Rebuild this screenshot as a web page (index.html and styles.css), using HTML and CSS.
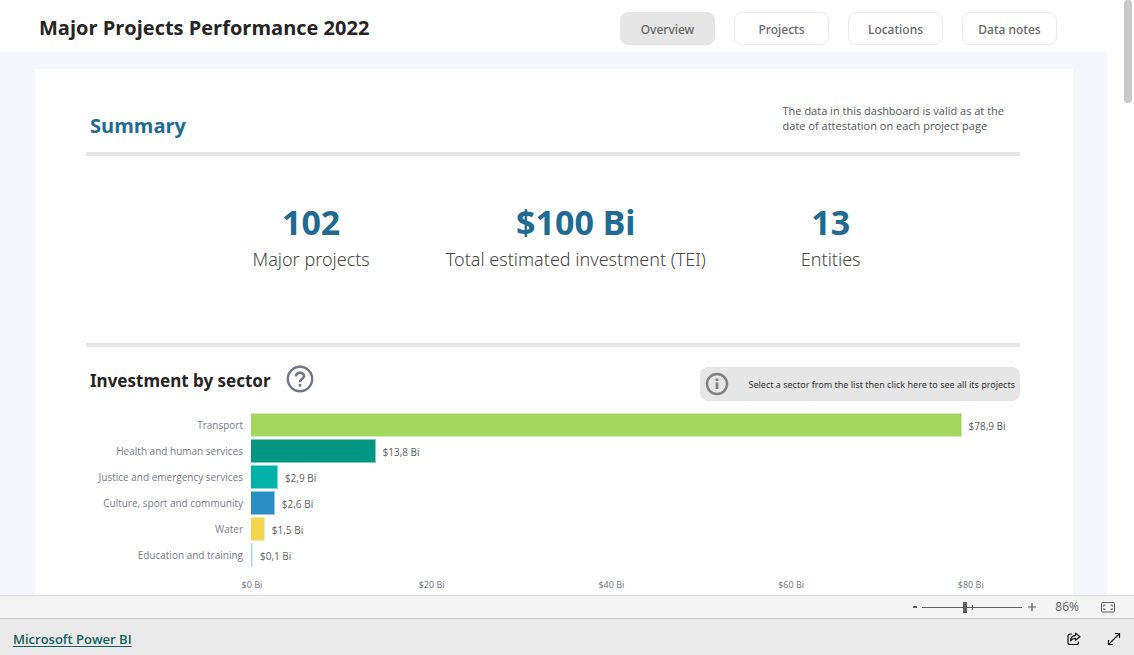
FILE: index.html
```html
<!DOCTYPE html>
<html lang="en">
<head>
<meta charset="utf-8">
<title>Major Projects Performance 2022</title>
<link rel="stylesheet" href="styles.css">
</head>
<body>
<div class="viewport">
  <div class="report">
    <header class="report-header">
      <h1 class="report-title">Major Projects Performance 2022</h1>
      <nav class="tabs">
        <button class="tab tab-active" type="button">Overview</button>
        <button class="tab" type="button">Projects</button>
        <button class="tab" type="button">Locations</button>
        <button class="tab" type="button">Data notes</button>
      </nav>
    </header>
    <main class="canvas">
      <div class="card">
        <section class="summary-head">
          <h2 class="summary-title">Summary</h2>
          <p class="note">The data in this dashboard is valid as at the<br>date of attestation on each project page</p>
        </section>
        <section class="kpis">
          <div class="kpi"><strong class="kpi-value">102</strong><span class="kpi-label">Major projects</span></div>
          <div class="kpi"><strong class="kpi-value">$100 Bi</strong><span class="kpi-label">Total estimated investment (TEI)</span></div>
          <div class="kpi"><strong class="kpi-value">13</strong><span class="kpi-label">Entities</span></div>
        </section>
        <section class="sector">
          <div class="sector-head">
            <h2 class="sector-title">Investment by sector</h2>
            <button class="help" type="button" aria-label="Help">
              <svg width="28" height="28" viewBox="0 0 28 28" fill="none" stroke="#70758c"><circle cx="14" cy="14" r="12.2" stroke-width="2.4"/><path d="M10 11.500C10 6.600 18 6.600 18 11.200C18 13.800 14 14 14 17.200" stroke-width="2.500"/><path d="M14 19v2.600" stroke-width="2.600"/></svg>
            </button>
            <button class="hint" type="button">
              <svg width="24" height="24" viewBox="0 0 24 24" fill="none" stroke="#808080"><circle cx="12" cy="12" r="10" stroke-width="2.400"/><path d="M12 10.500v6.500M12 6.500v2.500" stroke-width="2.800"/></svg>
              <span class="hint-text">Select a sector from the list then click here to see all its projects</span>
            </button>
          </div>
          <div class="chart">
            <div class="row"><span class="row-label">Transport</span><div class="track"><div class="bar bar-transport" style="width:92.4%"></div><span class="row-value">$78,9 Bi</span></div></div>
            <div class="row"><span class="row-label">Health and human services</span><div class="track"><div class="bar bar-health" style="width:16.2%"></div><span class="row-value">$13,8 Bi</span></div></div>
            <div class="row"><span class="row-label">Justice and emergency services</span><div class="track"><div class="bar bar-justice" style="width:3.5%"></div><span class="row-value">$2,9 Bi</span></div></div>
            <div class="row"><span class="row-label">Culture, sport and community</span><div class="track"><div class="bar bar-culture" style="width:3.1%"></div><span class="row-value">$2,6 Bi</span></div></div>
            <div class="row"><span class="row-label">Water</span><div class="track"><div class="bar bar-water" style="width:1.8%"></div><span class="row-value">$1,5 Bi</span></div></div>
            <div class="row"><span class="row-label">Education and training</span><div class="track"><div class="bar bar-education" style="width:0.2%"></div><span class="row-value">$0,1 Bi</span></div></div>
            <div class="axis"><span class="tick">$0 Bi</span><span class="tick">$20 Bi</span><span class="tick">$40 Bi</span><span class="tick">$60 Bi</span><span class="tick">$80 Bi</span></div>
          </div>
        </section>
      </div>
    </main>
  </div>
  <div class="scrollbar"><div class="scroll-thumb"></div></div>
</div>
<div class="zoombar">
  <button class="zoom-step" type="button" aria-label="Zoom out"><svg width="6" height="12" viewBox="0 0 6 12"><path d="M1 6h4" stroke="#605e5c" stroke-width="2"/></svg></button>
  <input class="zoom-slider" type="range" min="0" max="200" value="86" aria-label="Zoom">
  <button class="zoom-step zoom-plus" type="button" aria-label="Zoom in"><svg width="8" height="12" viewBox="0 0 8 12"><path d="M0 6h8M4 2v8" stroke="#605e5c" stroke-width="1.200"/></svg></button>
  <output class="zoom-value">86%</output>
  <button class="zoom-fit" type="button" aria-label="Fit to page"><svg width="14" height="11" viewBox="0 0 14 11" fill="none" stroke="#605e5c"><rect x=".5" y=".5" width="13" height="9.500" rx="1"/><path d="M4.500 3H2.800v1.500M4.500 7.500H2.800V6M9.500 3h1.700v1.500M9.500 7.500h1.700V6"/></svg></button>
</div>
<footer class="footer">
  <a class="brand" href="#">Microsoft Power BI</a>
  <button class="icon-button" type="button" aria-label="Share"><svg width="14" height="14" viewBox="0 0 14 14" fill="none" stroke="#111" stroke-width="1.200" stroke-linejoin="round"><path d="M5 2H3a2 2 0 0 0-2 2v6.500a2 2 0 0 0 2 2h6.500a2 2 0 0 0 2-2V9.500"/><path d="M8.500 1.200L13 4.800L8.500 8.300V6.300C6.200 6.200 4.800 7 3.600 8.800C3.800 5.600 5.500 3.500 8.500 3.300Z"/></svg></button>
  <button class="icon-button" type="button" aria-label="Full screen"><svg width="14" height="14" viewBox="0 0 14 14" fill="none" stroke="#111" stroke-width="1.200"><path d="M1.500 12.500L12.500 1.500M8 1.500h4.500V6M1.500 8v4.500H6"/></svg></button>
</footer>
</body>
</html>
```
FILE: styles.css
```css
* { box-sizing: border-box; }
body {
  margin: 0;
  height: 100vh;
  display: flex;
  flex-direction: column;
  background: #fff;
  color: #252423;
  font-family: "Noto Sans", "Open Sans", sans-serif;
}
h1, h2, p { margin: 0; }
button { font: inherit; color: inherit; border: 0; padding: 0; background: none; cursor: pointer; }
svg { display: block; }

.viewport { flex: 1; min-height: 0; display: flex; overflow: hidden; }
.report { flex: 1; min-width: 0; display: flex; flex-direction: column; }
.report-header {
  display: flex;
  flex: none;
  align-items: center;
  justify-content: space-between;
  height: 52px;
  padding: 4px 50px 0 39px;
}
.report-title { font: 700 20px/28px "Open Sans", sans-serif; color: #252423; }
.tabs { display: flex; gap: 19px; padding-top: 1px; }
.tab {
  width: 95px;
  height: 33px;
  padding-top: 1px;
  border: 1px solid #e9e9e9;
  border-radius: 8px;
  font-weight: 500;
  font-size: 12px;
  color: #666;
}
.tab-active { background: #e6e6e6; border-color: #e6e6e6; }

.canvas { flex: 1; background: #f5f7fc; padding: 17px 34px 0 35px; }
.card { background: #fff; padding: 33px 53px 12px 51px; }

.summary-head {
  display: flex;
  justify-content: space-between;
  align-items: flex-start;
  height: 54px;
  padding: 0 16px 0 4px;
  border-bottom: 4px solid #e6e6e6;
}
.summary-title { padding-top: 10px; font: 700 20px/28px "Open Sans", sans-serif; color: #216b93; }
.note { padding-top: 1px; font: 11px/15px "Open Sans", sans-serif; color: #555; }

.kpis {
  display: flex;
  justify-content: center;
  gap: 76px;
  height: 191px;
  padding: 44px 0 0 7px;
  border-bottom: 4px solid #e6e6e6;
}
.kpi { display: flex; flex-direction: column; align-items: center; }
.kpi:last-child { padding-left: 19px; }
.kpi-value { font-weight: 700; font-size: 34px; line-height: 44px; color: #216b93; }
.kpi-label { font-size: 18px; line-height: 30px; color: #484644; font-weight: 300; }

.sector-head { display: flex; align-items: flex-start; padding: 18px 0 11px 4px; }
.sector-title { margin-top: 2px; font-weight: 700; font-size: 17px; line-height: 28px; color: #252423; }
.help { margin-left: 15px; }
.hint {
  display: flex;
  align-items: center;
  gap: 20px;
  height: 34px;
  margin: 2px 0 0 auto;
  padding: 0 5px;
  border-radius: 8px;
  background: #e6e6e6;
  color: #333;
  font-size: 9px;
}
.row { display: flex; align-items: center; gap: 8px; height: 26px; }
.row-label { flex: none; width: 157px; text-align: right; font: 10px/14px "Open Sans", sans-serif; color: #777b8c; }
.track { flex: 1; display: flex; align-items: center; gap: 7px; }
.bar { height: 24px; flex: none; border: 1px solid rgba(255, 255, 255, 0.5); border-left-width: 0; }
.bar-transport { background: #a4d65e; }
.bar-health { background: #009681; }
.bar-justice { background: #00b2a9; }
.bar-culture { background: #2a8dc3; }
.bar-water { background: #f4d54e; }
.bar-education { background: #a5dceb; min-width: 2px; }
.row-value { padding-top: 2px; font: 10px/14px "Open Sans", sans-serif; color: #605e5c; white-space: nowrap; }
.axis { display: flex; margin: 10px 0 0 166px; }
.tick { flex: none; width: 23.4%; text-align: center; font-size: 9px; line-height: 14px; color: #777b8c; }
.tick:first-child { margin-left: -11.7%; }

.scrollbar { flex: none; width: 27px; padding: 0 2px 0 17px; }
.scroll-thumb { height: 103px; border-radius: 4px; background: #c8c8c8; }

.zoombar {
  flex: none;
  display: flex;
  align-items: center;
  justify-content: flex-end;
  height: 23px;
  padding-right: 19px;
  border-top: 1px solid #dcdcdc;
  background: #f4f4f4;
}
.zoom-slider {
  appearance: none;
  width: 100px;
  height: 12px;
  margin: 0 6px 0 4px;
  background:
    linear-gradient(#605e5c, #605e5c) 50px 50% / 1px 5px no-repeat,
    linear-gradient(#605e5c, #605e5c) 0 50% / 100% 1px no-repeat;
}
.zoom-slider::-webkit-slider-thumb { appearance: none; width: 4px; height: 11px; background: #605e5c; }
.zoom-value { width: 43px; text-align: right; font: 12px/16px "Open Sans", sans-serif; color: #605e5c; }
.zoom-fit { margin-left: 22px; }

.footer {
  flex: none;
  display: flex;
  align-items: center;
  height: 37px;
  padding: 4px 13px 0;
  border-top: 1px solid #c6c6c6;
  background: #eaeaea;
}
.brand { margin-right: auto; font: 600 13px/18px "Open Sans", sans-serif; color: #135f5d; text-underline-offset: 2px; }
.icon-button { margin-left: 26px; }
```
